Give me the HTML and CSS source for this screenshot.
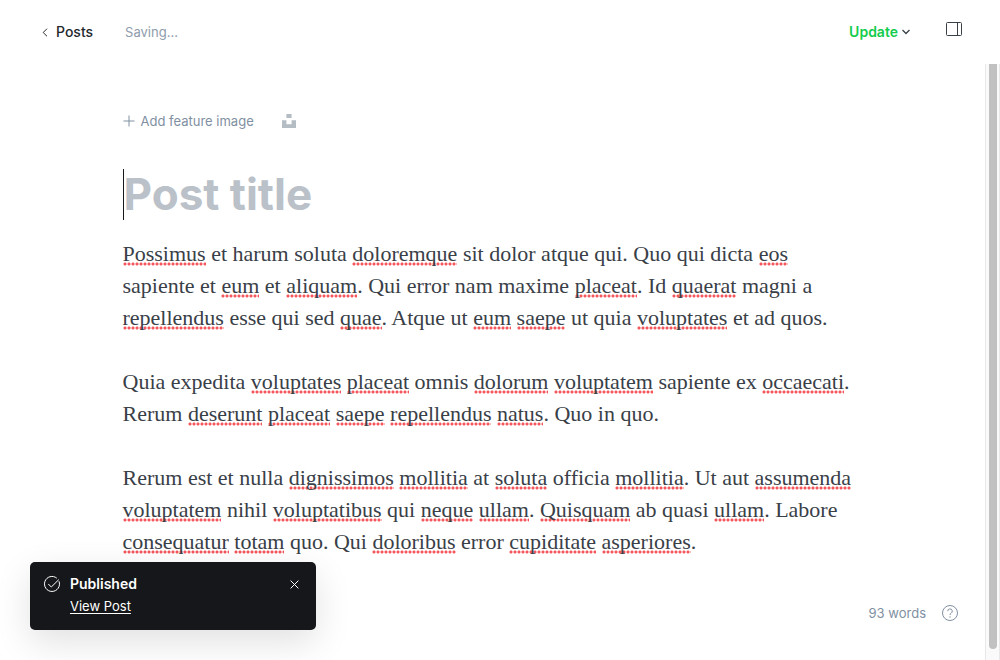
FILE: index.html
```html
<!DOCTYPE html>
<html lang="en">
<head>
<meta charset="utf-8">
<meta name="viewport" content="width=device-width, initial-scale=1">
<title>Post editor</title>
<link rel="stylesheet" href="styles.css">
</head>
<body>
<div class="app">
  <header class="topbar">
    <a class="back" href="#">
      <svg class="back-icon" viewBox="0 0 6 9" aria-hidden="true"><path d="M5 .7 1.2 4.5 5 8.3"/></svg>
      <span>Posts</span>
    </a>
    <span class="status">Saving...</span>
    <button class="update" type="button">
      <span>Update</span>
      <svg class="chevron" viewBox="0 0 8 6" aria-hidden="true"><path d="M.5 1 4 4.500 7.500 1"/></svg>
    </button>
    <button class="sidebar-toggle" type="button" aria-label="Settings">
      <svg viewBox="0 0 16 14" aria-hidden="true"><rect x=".5" y=".5" width="15" height="13" rx="1"/><path d="M11.5.5v13"/></svg>
    </button>
  </header>

  <div class="workspace">
    <main class="canvas">
      <div class="feature">
        <button class="add-image" type="button">
          <svg class="plus" viewBox="0 0 12 12" aria-hidden="true"><path d="M6 .5v11M.5 6h11"/></svg>
          <span>Add feature image</span>
        </button>
        <button class="unsplash" type="button" aria-label="Unsplash">
          <svg viewBox="0 0 14 14" aria-hidden="true"><path d="M4.4 0h5.2v4H4.4zM0 6.2h4.4v4h5.2v-4H14V14H0z"/></svg>
        </button>
      </div>
      <div class="title-field"><input class="title" type="text" placeholder="Post title" aria-label="Post title"></div>
      <article class="content">
        <p><u>Possimus</u> et harum soluta <u>doloremque</u> sit dolor atque qui. Quo qui dicta <u>eos</u><br> sapiente et <u>eum</u> et <u>aliquam</u>. Qui error nam maxime <u>placeat</u>. Id <u>quaerat</u> magni a<br> <u>repellendus</u> esse qui sed <u>quae</u>. Atque ut <u>eum</u> <u>saepe</u> ut quia <u>voluptates</u> et ad quos.</p>
        <p>Quia expedita <u>voluptates</u> <u>placeat</u> omnis <u>dolorum</u> <u>voluptatem</u> sapiente ex <u>occaecati</u>.<br> Rerum <u>deserunt</u> <u>placeat</u> <u>saepe</u> <u>repellendus</u> <u>natus</u>. Quo in quo.</p>
        <p>Rerum est et nulla <u>dignissimos</u> <u>mollitia</u> at <u>soluta</u> officia <u>mollitia</u>. Ut aut <u>assumenda</u><br> <u>voluptatem</u> nihil <u>voluptatibus</u> qui <u>neque</u> <u>ullam</u>. <u>Quisquam</u> ab quasi <u>ullam</u>. Labore<br> <u>consequatur</u> <u>totam</u> quo. Qui <u>doloribus</u> error <u>cupiditate</u> <u>asperiores</u>.</p>
      </article>
    </main>
    <div class="scroll-track" aria-hidden="true"><div class="scroll-thumb"></div></div>
  </div>

  <div class="word-count">
    <span>93 words</span>
    <button class="help" type="button" aria-label="Help">
      <svg viewBox="0 0 16 16" aria-hidden="true"><circle cx="8" cy="8" r="7.5"/><path d="M5.700 6.200a2.300 2.300 0 1 1 3.400 2C8.300 8.700 8 9 8 10"/><circle class="dot" cx="8" cy="11.900" r=".7"/></svg>
    </button>
  </div>

  <aside class="toast" role="status">
    <svg class="toast-icon" viewBox="0 0 16 16" aria-hidden="true"><path d="M15 5.300A7.500 7.500 0 1 1 12.800 2.200M4.300 8l3 3L14.800 3.600"/></svg>
    <div class="toast-body">
      <strong class="toast-title">Published</strong>
      <a class="toast-link" href="#">View Post</a>
    </div>
    <button class="toast-close" type="button" aria-label="Close">
      <svg viewBox="0 0 9 9" aria-hidden="true"><path d="m.6.6 7.800 7.800M8.400.6.6 8.400"/></svg>
    </button>
  </aside>
</div>
</body>
</html>
```
FILE: styles.css
```css
* {
  box-sizing: border-box;
}

body {
  margin: 0;
  background: #fff;
  color: #394047;
  font: 14px/20px Inter, "Liberation Sans", sans-serif;
}

button {
  display: flex;
  align-items: center;
  padding: 0;
  border: 0;
  background: none;
  color: inherit;
  font: inherit;
}

a {
  color: inherit;
  text-decoration: none;
}

svg {
  display: block;
  flex: none;
  fill: none;
  stroke: currentColor;
}

.app {
  position: relative;
  display: flex;
  flex-direction: column;
  height: 100vh;
  overflow: hidden;
}

.topbar {
  display: flex;
  align-items: center;
  height: 64px;
  padding: 0 38px 0 42px;
}

.back {
  display: flex;
  align-items: center;
  gap: 8px;
  font-weight: 500;
  color: #23282d;
}

.back-icon {
  width: 6px;
  height: 9px;
}

.status {
  margin-left: 32px;
  color: #8e9cac;
  font-size: 13px;
}

.update {
  gap: 4px;
  margin-left: auto;
  color: #14cc4c;
  font-weight: 600;
}

.chevron {
  width: 8px;
  height: 6px;
  color: #394047;
  stroke-width: 1.3;
}

.sidebar-toggle {
  margin: 0 0 6px 36px;
}

.sidebar-toggle svg {
  width: 16px;
  height: 14px;
}

.workspace {
  display: flex;
  flex: 1;
  min-height: 0;
}

.canvas {
  flex: 1;
  min-width: 0;
  padding: 47px 24px 0;
}

.feature,
.title-field,
.content {
  max-width: 740px;
  margin: 0 auto;
}

.feature {
  display: flex;
  gap: 28px;
  color: #8090a2;
  font-size: 13px;
}

.add-image {
  gap: 6px;
}

.plus {
  width: 12px;
  height: 12px;
}

.unsplash {
  color: #b3bdc3;
}

.unsplash svg {
  width: 14px;
  height: 14px;
  fill: currentColor;
  stroke: none;
}

.title-field {
  margin-top: 38px;
  border-left: 1px solid #15171a;
}

.title {
  display: block;
  width: 100%;
  height: 51px;
  padding: 0;
  border: 0;
  outline: 0;
  background: none;
  color: #15171a;
  font: 700 44px/51px Inter, "Liberation Sans", sans-serif;
}

.title::placeholder {
  color: #bac1c8;
  opacity: 1;
}

.content {
  margin-top: 18px;
  color: #394047;
  font: 22px/32px Georgia, "Liberation Serif", serif;
  white-space: nowrap;
}

.content p {
  margin: 0 0 32px;
}

.content u {
  background: radial-gradient(circle, #f4575c 1px, transparent 2px) left bottom / 4px 4px repeat-x;
  text-decoration: none;
}

.scroll-track {
  width: 15px;
  padding: 0 2px 11px 3px;
  border: solid #e8e8e8;
  border-width: 0 1px;
  background: #fafafa;
}

.scroll-thumb {
  height: 100%;
  border-radius: 0 0 4px 4px;
  background: #c1c1c1;
}

.word-count {
  position: absolute;
  right: 42px;
  bottom: 37px;
  display: flex;
  gap: 16px;
  color: #8090a2;
  font-size: 13px;
}

.help svg {
  width: 16px;
  height: 16px;
}

.help .dot {
  fill: currentColor;
  stroke: none;
}

.toast {
  position: absolute;
  left: 30px;
  bottom: 30px;
  display: flex;
  align-items: flex-start;
  gap: 10px;
  width: 286px;
  padding: 12px 17px 12px 14px;
  border-radius: 5px;
  background: #15171a;
  box-shadow: 0 12px 36px rgba(0, 0, 0, 0.12);
  color: #fff;
}

.toast-icon {
  width: 16px;
  height: 16px;
  margin-top: 2px;
}

.toast-body {
  display: flex;
  flex: 1;
  flex-direction: column;
  align-items: flex-start;
  gap: 2px;
  padding-bottom: 2px;
}

.toast-title {
  font-weight: 600;
}

.toast-link {
  font-size: 13px;
  text-decoration: underline;
  text-underline-offset: 2px;
}

.toast-close {
  height: 20px;
}

.toast-close svg {
  width: 9px;
  height: 9px;
}
```
